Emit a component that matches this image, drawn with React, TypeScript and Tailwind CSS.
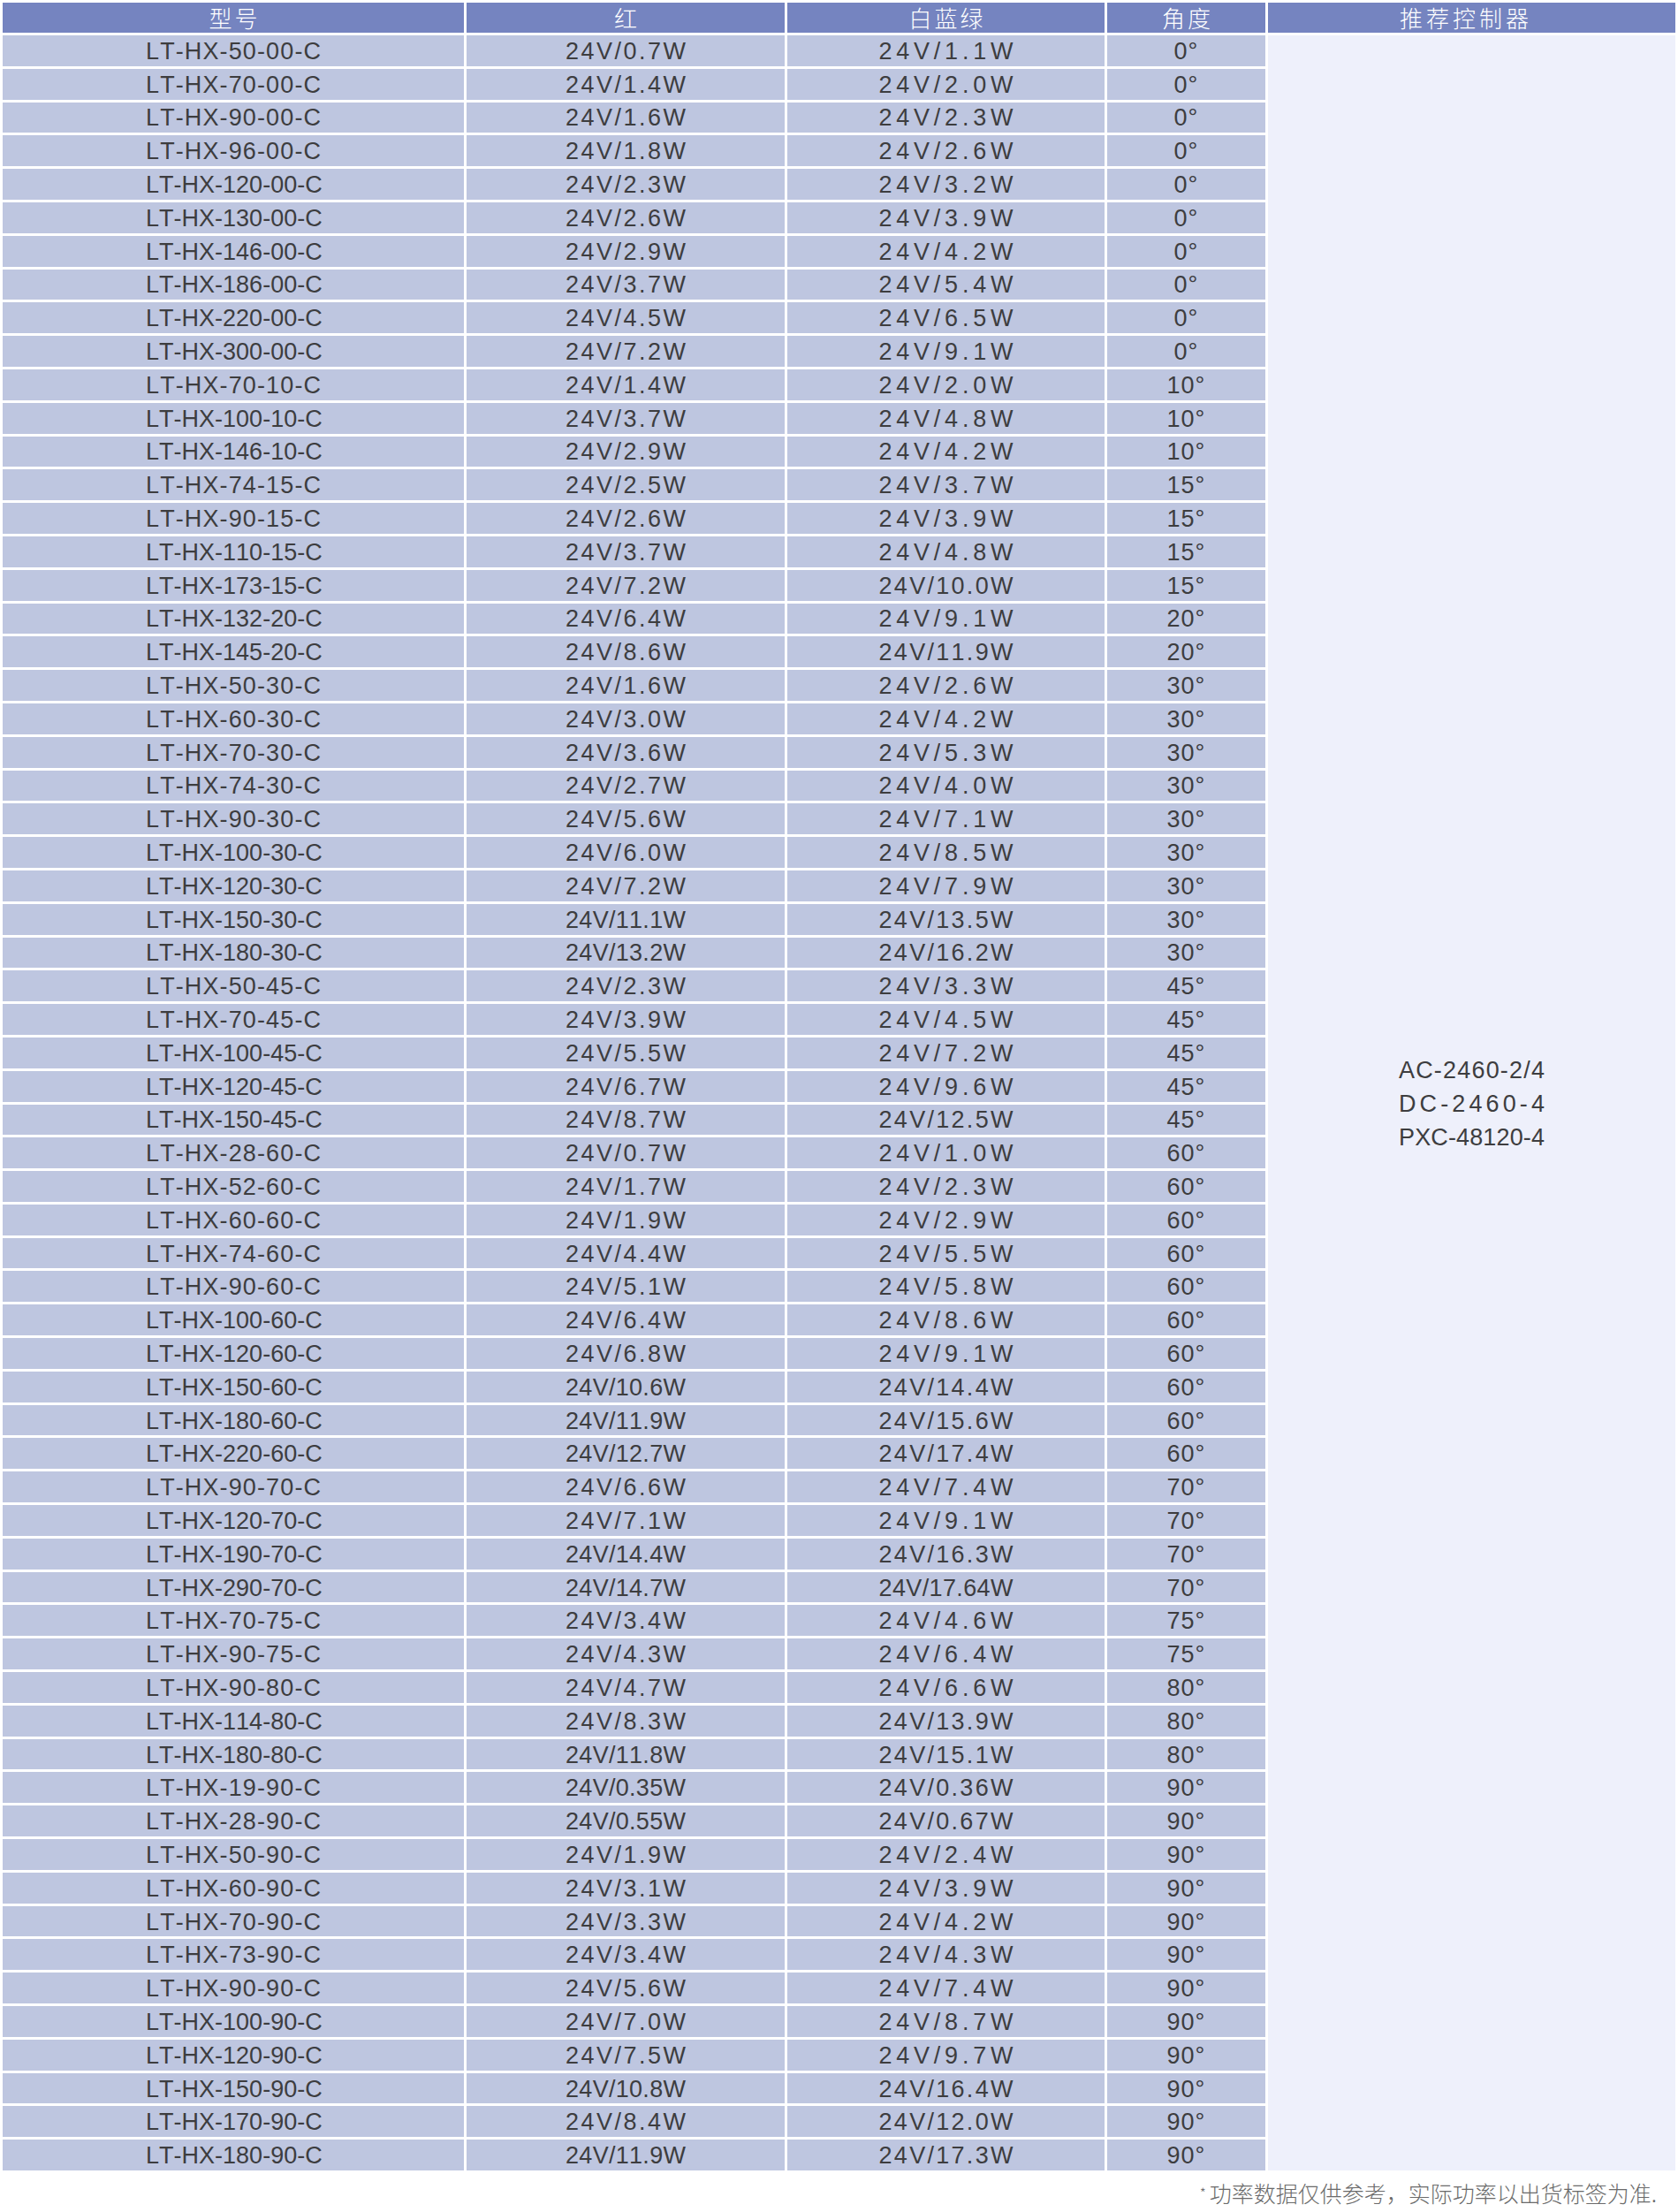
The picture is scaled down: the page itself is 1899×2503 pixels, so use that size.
import React from "react";

type Row = [string, string, string, string];

const rows: Row[] = [
  ["LT-HX-50-00-C", "24V/0.7W", "24V/1.1W", "0°"],
  ["LT-HX-70-00-C", "24V/1.4W", "24V/2.0W", "0°"],
  ["LT-HX-90-00-C", "24V/1.6W", "24V/2.3W", "0°"],
  ["LT-HX-96-00-C", "24V/1.8W", "24V/2.6W", "0°"],
  ["LT-HX-120-00-C", "24V/2.3W", "24V/3.2W", "0°"],
  ["LT-HX-130-00-C", "24V/2.6W", "24V/3.9W", "0°"],
  ["LT-HX-146-00-C", "24V/2.9W", "24V/4.2W", "0°"],
  ["LT-HX-186-00-C", "24V/3.7W", "24V/5.4W", "0°"],
  ["LT-HX-220-00-C", "24V/4.5W", "24V/6.5W", "0°"],
  ["LT-HX-300-00-C", "24V/7.2W", "24V/9.1W", "0°"],
  ["LT-HX-70-10-C", "24V/1.4W", "24V/2.0W", "10°"],
  ["LT-HX-100-10-C", "24V/3.7W", "24V/4.8W", "10°"],
  ["LT-HX-146-10-C", "24V/2.9W", "24V/4.2W", "10°"],
  ["LT-HX-74-15-C", "24V/2.5W", "24V/3.7W", "15°"],
  ["LT-HX-90-15-C", "24V/2.6W", "24V/3.9W", "15°"],
  ["LT-HX-110-15-C", "24V/3.7W", "24V/4.8W", "15°"],
  ["LT-HX-173-15-C", "24V/7.2W", "24V/10.0W", "15°"],
  ["LT-HX-132-20-C", "24V/6.4W", "24V/9.1W", "20°"],
  ["LT-HX-145-20-C", "24V/8.6W", "24V/11.9W", "20°"],
  ["LT-HX-50-30-C", "24V/1.6W", "24V/2.6W", "30°"],
  ["LT-HX-60-30-C", "24V/3.0W", "24V/4.2W", "30°"],
  ["LT-HX-70-30-C", "24V/3.6W", "24V/5.3W", "30°"],
  ["LT-HX-74-30-C", "24V/2.7W", "24V/4.0W", "30°"],
  ["LT-HX-90-30-C", "24V/5.6W", "24V/7.1W", "30°"],
  ["LT-HX-100-30-C", "24V/6.0W", "24V/8.5W", "30°"],
  ["LT-HX-120-30-C", "24V/7.2W", "24V/7.9W", "30°"],
  ["LT-HX-150-30-C", "24V/11.1W", "24V/13.5W", "30°"],
  ["LT-HX-180-30-C", "24V/13.2W", "24V/16.2W", "30°"],
  ["LT-HX-50-45-C", "24V/2.3W", "24V/3.3W", "45°"],
  ["LT-HX-70-45-C", "24V/3.9W", "24V/4.5W", "45°"],
  ["LT-HX-100-45-C", "24V/5.5W", "24V/7.2W", "45°"],
  ["LT-HX-120-45-C", "24V/6.7W", "24V/9.6W", "45°"],
  ["LT-HX-150-45-C", "24V/8.7W", "24V/12.5W", "45°"],
  ["LT-HX-28-60-C", "24V/0.7W", "24V/1.0W", "60°"],
  ["LT-HX-52-60-C", "24V/1.7W", "24V/2.3W", "60°"],
  ["LT-HX-60-60-C", "24V/1.9W", "24V/2.9W", "60°"],
  ["LT-HX-74-60-C", "24V/4.4W", "24V/5.5W", "60°"],
  ["LT-HX-90-60-C", "24V/5.1W", "24V/5.8W", "60°"],
  ["LT-HX-100-60-C", "24V/6.4W", "24V/8.6W", "60°"],
  ["LT-HX-120-60-C", "24V/6.8W", "24V/9.1W", "60°"],
  ["LT-HX-150-60-C", "24V/10.6W", "24V/14.4W", "60°"],
  ["LT-HX-180-60-C", "24V/11.9W", "24V/15.6W", "60°"],
  ["LT-HX-220-60-C", "24V/12.7W", "24V/17.4W", "60°"],
  ["LT-HX-90-70-C", "24V/6.6W", "24V/7.4W", "70°"],
  ["LT-HX-120-70-C", "24V/7.1W", "24V/9.1W", "70°"],
  ["LT-HX-190-70-C", "24V/14.4W", "24V/16.3W", "70°"],
  ["LT-HX-290-70-C", "24V/14.7W", "24V/17.64W", "70°"],
  ["LT-HX-70-75-C", "24V/3.4W", "24V/4.6W", "75°"],
  ["LT-HX-90-75-C", "24V/4.3W", "24V/6.4W", "75°"],
  ["LT-HX-90-80-C", "24V/4.7W", "24V/6.6W", "80°"],
  ["LT-HX-114-80-C", "24V/8.3W", "24V/13.9W", "80°"],
  ["LT-HX-180-80-C", "24V/11.8W", "24V/15.1W", "80°"],
  ["LT-HX-19-90-C", "24V/0.35W", "24V/0.36W", "90°"],
  ["LT-HX-28-90-C", "24V/0.55W", "24V/0.67W", "90°"],
  ["LT-HX-50-90-C", "24V/1.9W", "24V/2.4W", "90°"],
  ["LT-HX-60-90-C", "24V/3.1W", "24V/3.9W", "90°"],
  ["LT-HX-70-90-C", "24V/3.3W", "24V/4.2W", "90°"],
  ["LT-HX-73-90-C", "24V/3.4W", "24V/4.3W", "90°"],
  ["LT-HX-90-90-C", "24V/5.6W", "24V/7.4W", "90°"],
  ["LT-HX-100-90-C", "24V/7.0W", "24V/8.7W", "90°"],
  ["LT-HX-120-90-C", "24V/7.5W", "24V/9.7W", "90°"],
  ["LT-HX-150-90-C", "24V/10.8W", "24V/16.4W", "90°"],
  ["LT-HX-170-90-C", "24V/8.4W", "24V/12.0W", "90°"],
  ["LT-HX-180-90-C", "24V/11.9W", "24V/17.3W", "90°"],
];

function Spread({ text, className }: { text: string; className: string }) {
  return (
    <span className={"flex justify-between " + className}>
      {text.split("").map((c, i) => (
        <span key={i}>{c}</span>
      ))}
    </span>
  );
}

const cell =
  "bg-[#bec6e0] flex items-center justify-center text-[#3d3d3f] text-[27px] leading-none pt-[2px]";

export default function App() {
  return (
    <div
      className="w-[1899px] h-[2503px] bg-white pl-[3px] pt-[3px]"
      style={{ fontFamily: '"Liberation Sans", Arial, "Noto Sans CJK SC", sans-serif' }}
    >
      <div className="grid grid-cols-[522px_360px_359px_179px_461px] grid-rows-[34px_repeat(64,34.8px)] gap-[3px] w-[1893px]">
        {["型号", "红", "白蓝绿", "角度", "推荐控制器"].map((h, i) => (
          <div
            key={h}
            className={
              "bg-[#7584c0] flex items-center justify-center text-white text-[26px] leading-none font-light pl-[3px] " +
              (i === 4 ? "tracking-[4px] pr-[16px]" : "tracking-[3px]")
            }
            style={{ fontFamily: '"Noto Sans CJK SC", "Noto Sans", sans-serif' }}
          >
            {h}
          </div>
        ))}
        {rows.map((r, i) => (
          <React.Fragment key={i}>
            <div className={cell}>
              <Spread text={r[0]} className="w-[198px]" />
            </div>
            <div className={cell}>
              <Spread text={r[1]} className="w-[136px]" />
            </div>
            <div className={cell}>
              <Spread text={r[2]} className="w-[152px]" />
            </div>
            <div className={cell + " tracking-[1px]"}>{r[3]}</div>
            {i === 0 && (
              <div className="[grid-row:2/span_64] [grid-column:5] bg-[#eef0fb] flex flex-col items-center justify-center text-[#3d3d3f] text-[27px] leading-[38px] pt-[2px]">
                <Spread text="AC-2460-2/4" className="w-[165px]" />
                <Spread text="DC-2460-4" className="w-[165px]" />
                <Spread text="PXC-48120-4" className="w-[165px]" />
              </div>
            )}
          </React.Fragment>
        ))}
      </div>
      <div className="flex justify-end pr-[24px] mt-[8px]">
        <p
          className="text-[25px] leading-[34px] text-[#6b6b6b] font-light"
          style={{ fontFamily: '"Noto Sans CJK SC", sans-serif' }}
        >
          <span className="text-[16px] align-top mr-[4px]">*</span>
          功率数据仅供参考，实际功率以出货标签为准.
        </p>
      </div>
    </div>
  );
}
